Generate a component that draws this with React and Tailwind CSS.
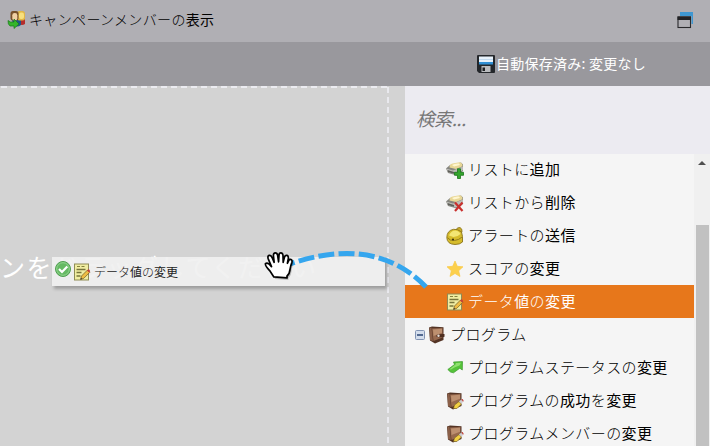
import React from "react";

const JP = "font-['Noto_Sans_CJK_JP',sans-serif]";

// Kana are set in a lighter weight than kanji.
function Jp({ children }) {
  const parts = children.match(/[\u3040-\u30ff]+|[^\u3040-\u30ff]+/g);
  return parts.map((p, i) => (
    <span key={i} className={/[\u3040-\u30ff]/.test(p) ? "font-light" : "font-normal"}>{p}</span>
  ));
}

function Members() {
  return (
    <svg width="19" height="19" viewBox="0 0 19 19" className="shrink-0">
      <path d="M12 9h6v5q-3 2-6 0z" fill="#b52d2c" />
      <path d="M5 9h9v6q-4 3-8 0z" fill="#1e5788" />
      <rect x="10" y="1" width="8" height="9.500" rx="2.500" fill="#e0b647" />
      <rect x="12" y="2.500" width="5" height="6.500" rx="2" fill="#f8e07d" />
      <rect x="3.500" y="1" width="8" height="9.500" rx="2.500" fill="#77502b" />
      <rect x="5.300" y="3" width="5" height="7.500" rx="2.300" fill="#f0d0a4" />
      <path d="M1 10.500l2.500 1.500H7V9l5 5-5 4.500V16H3Q.8 14.500 1 10.500z" fill="#35b52b" stroke="#18791a" strokeWidth=".7" />
    </svg>
  );
}

function Floppy() {
  return (
    <svg width="18" height="18" viewBox="0 0 18 18" className="shrink-0">
      <path d="M0 1q0-1 1-1h16q1 0 1 1v16q0 1-1 1H2l-2-2z" fill="#24272b" />
      <rect x="2" y="1.500" width="14" height="5.500" fill="#e8f2fb" />
      <rect x="2" y="4" width="14" height="1" fill="#c2daef" />
      <rect x="2" y="7" width="14" height="2.500" fill="#2f8fd4" />
      <rect x="4.500" y="11" width="9" height="6" fill="#b9bbbe" />
      <rect x="5.500" y="12.500" width="2.500" height="3.500" fill="#1d1f22" />
    </svg>
  );
}

function Windows() {
  return (
    <svg width="17" height="17" viewBox="0 0 17 17" className="shrink-0">
      <path d="M3 0h13v12h-1.500V4H3z" fill="#3f97d1" />
      <rect x="1" y="5" width="12.500" height="10.500" fill="#b0afb4" stroke="#29292c" strokeWidth="1.100" />
      <rect x=".5" y="4.500" width="13.500" height="3.500" fill="#222225" />
    </svg>
  );
}

function ListBase({ children }) {
  return (
    <svg width="18" height="18" viewBox="0 0 18 18" className="shrink-0">
      <path d="M0 7.500L4 4l11-2.500 2 2V10l-6 4.500L2 12z" fill="#85857f" />
      <path d="M0 7.500l7 2 10-4V9l-7 4.500L2 11z" fill="#bdbdb8" />
      <path d="M1.500 9l6.500 2v1.800L2 11z" fill="#5e5e59" />
      <path d="M3.500 6.500Q3.500 3 6.500 2.500l7-1.300q3 .3 3 4L10 8z" fill="#e8d796" />
      <path d="M6 4q3-2 7-1.500l1 1.500-6 1.500z" fill="#fff6cf" />
      {children}
    </svg>
  );
}

function ListAdd() {
  return (
    <ListBase>
      <path d="M11.500 7.800h3v3.500h3v3h-3v3.200h-3v-3.200h-3v-3h3z" fill="#34a52d" stroke="#177416" strokeWidth=".8" />
    </ListBase>
  );
}

function ListRemove() {
  return (
    <ListBase>
      <path d="M9 8.500l7.500 8.500M16.500 8.500L9 17" stroke="#c9302e" strokeWidth="2.200" />
    </ListBase>
  );
}

function Bell() {
  return (
    <svg width="18" height="18" viewBox="0 0 18 18" className="shrink-0">
      <path d="M10 3q1-3 4-2.500 2.500 1 2 4.500l-2 1z" fill="#c9ad2b" stroke="#8a741b" strokeWidth=".8" />
      <path d="M.8 10.500Q1 3.500 7.500 2.300q4-.6 8 2.700 1.500 4 1 10-2.500 2.500-7.500 2.500-8-.3-8.200-7z" fill="#d6bc2c" stroke="#8a741b" strokeWidth=".9" />
      <path d="M3 8.500q2-5 6.500-5 4 .5 5 3.500-3 3-7 3z" fill="#f3e674" />
      <path d="M1.500 10.500q2 3.500 7 3 4.500-.5 7.500-3.500" fill="none" stroke="#8b751d" strokeWidth=".9" />
      <circle cx="7" cy="12.500" r="1.100" fill="#433810" />
    </svg>
  );
}

function Star() {
  return (
    <svg width="18" height="18" viewBox="0 0 18 18" className="shrink-0">
      <path d="M9 1l2.300 5.300 5.700.5-4.300 3.900 1.300 5.800-5-3-5 3 1.300-5.800L1 6.800l5.700-.5z" fill="#fcd04c" stroke="#f9c846" strokeWidth=".7" strokeLinejoin="round" />
    </svg>
  );
}

function Note() {
  return (
    <svg width="18" height="18" viewBox="0 0 18 18" className="shrink-0">
      <rect x="1.500" y="1" width="14" height="16" fill="#f0eda2" stroke="#8f8b55" />
      <path d="M4 3.500h3m1.500 0h3" stroke="#85813d" />
      <path d="M3.500 6.500h9M3.500 9.500h5M3.500 13h4" stroke="#77753c" strokeWidth="1.400" />
      <path d="M7.500 16.500l1-3.500 6-6 2.300 2.300-6 6z" fill="#efbd43" stroke="#6e571e" strokeWidth=".7" />
      <path d="M14 7.500l1.200-1.200q1.500.2 2 2L16 9.500z" fill="#c5403a" />
      <path d="M7.500 16.500l.5-1.700 1.300 1.200z" fill="#333" />
    </svg>
  );
}

function Book({ edit }) {
  return (
    <svg width="18" height="18" viewBox="0 0 18 18" className="shrink-0">
      <path d="M1 1.500L4 .5l11.500.8V14l-8.500 3.500-5-3z" fill="#533324" />
      <path d="M1.500 2l2-.5 1.500 13.500-3-1z" fill="#8b6049" />
      <path d="M4 2.500l10.500-.5v9.500L5.500 15z" fill="#97694e" />
      <path d="M5 3.500l9-.7v4L5.500 10z" fill="#bd9070" />
      {!edit && <><path d="M8.500 9q4-1.500 8-1v2.700q-4 1-8 0z" fill="#4d2d20" /><circle cx="10.500" cy="9.800" r="1.200" fill="#e4ddd8" /></>}
      {edit && <><path d="M7.500 16.500l1-3.500 4.500-3.500 2.500 2.500-4.500 4.500z" fill="#f1cf42" stroke="#735d24" strokeWidth=".6" /><path d="M13 9.500l2-1.700 2 2-1.500 2.200z" fill="#cfcfd2" /><path d="M15.500 7.500l1.200-.5 1 2-.7.800z" fill="#bc302b" /></>}
    </svg>
  );
}

function ArrowUp() {
  return (
    <svg width="18" height="18" viewBox="0 0 18 18" className="shrink-0">
      <path d="M7.500 3l9-.4-.2 8.400-2.500-1.800-6.300 4.600q-3 .2-5.700-3.300L8.500 5.500z" fill="#55c33a" stroke="#3a9a2b" strokeWidth=".7" />
      <path d="M9.500 4l5.500-.2-1.500 2.700q-5 1.500-8.500 4l-1.500-.2L10 5z" fill="#8fe070" />
    </svg>
  );
}

function Check() {
  return (
    <svg width="18" height="18" viewBox="0 0 18 18" className="shrink-0">
      <circle cx="9" cy="9" r="7.500" fill="#65b963" stroke="#519e52" />
      <circle cx="9" cy="9" r="6.300" fill="none" stroke="#93d690" />
      <path d="M5 9l3 3 5.300-5.500" fill="none" stroke="#fff" strokeWidth="2.200" />
    </svg>
  );
}

const rows = [
  { icon: <ListAdd />, label: "リストに追加" },
  { icon: <ListRemove />, label: "リストから削除" },
  { icon: <Bell />, label: "アラートの送信" },
  { icon: <Star />, label: "スコアの変更" },
  { icon: <Note />, label: "データ値の変更", selected: true },
  { icon: <Book />, label: "プログラム", group: true },
  { icon: <ArrowUp />, label: "プログラムステータスの変更" },
  { icon: <Book edit />, label: "プログラムの成功を変更" },
  { icon: <Book edit />, label: "プログラムメンバーの変更" },
];

function Row({ icon, label, selected, group }) {
  return (
    <li className={`flex h-[33px] shrink-0 items-center text-[15px] tracking-[0.4px] ${group ? "pl-[10px]" : "pl-[41px]"} ${selected ? "bg-[#e7771b] text-white" : "text-black"}`}>
      {group && (
        <svg width="10" height="10" viewBox="0 0 10 10" className="mr-[3px] shrink-0">
          <rect x=".5" y=".5" width="9" height="9" rx="1" fill="#d4deed" stroke="#8294b4" />
          <path d="M2 5h6" stroke="#294372" strokeWidth="1.500" />
        </svg>
      )}
      {icon}
      <span className="ml-[4px]"><Jp>{label}</Jp></span>
    </li>
  );
}

export default function App() {
  return (
    <div className={`relative flex h-[446px] w-[710px] flex-col overflow-hidden whitespace-nowrap bg-[#d3d3d3] ${JP}`}>
      <header className="flex h-[42px] shrink-0 items-center justify-between bg-[#b0afb4] pr-4 pl-[7px]">
        <div className="flex items-center gap-[3px] pb-[3px] text-[14px] tracking-[0.35px] text-black">
          <Members />
          <span><Jp>キャンペーンメンバーの表示</Jp></span>
        </div>
        <div className="pb-[2px]"><Windows /></div>
      </header>
      <div className="flex h-[44px] shrink-0 items-center bg-[#99989d] pl-[477px] text-[14px] tracking-[0.25px] text-white">
        <Floppy />
        <span className="-mt-px ml-px">自動保存済み: 変更なし</span>
      </div>
      <main className="flex min-h-0 flex-1">
        <section className="relative mr-4 w-[389px] shrink-0 overflow-visible">
          <svg width="389" height="360" className="absolute inset-0">
            <path d="M0 1H388" stroke="#ececf1" strokeWidth="2" strokeDasharray="6 4" strokeDashoffset="-1" />
            <path d="M388 1V360" stroke="#e9e9ee" strokeWidth="2" strokeDasharray="6 4" />
          </svg>
          <p className="pt-[162px] text-[25px] leading-9 tracking-[1.6px] text-white">ンをドラッグしてください</p>
          <div className="absolute top-[171px] left-[52px] flex h-[29px] w-[333px] items-center bg-[#f0f0f0]/92 pl-[2px] text-[12px] text-[#222] shadow-[2px_3px_3px_rgba(0,0,0,0.25)]">
            <div className="mb-[5px]"><Check /></div>
            <div className="ml-px"><Note /></div>
            <span className="ml-[3px]"><Jp>データ値の変更</Jp></span>
          </div>
        </section>
        <aside className="flex min-w-0 flex-1 flex-col bg-[#f5f5f5]">
          <div className="flex h-[68px] shrink-0 items-center bg-[#ecebf1] pb-[3px] pl-[11px] text-[18.5px] font-normal tracking-[-0.6px] text-[#777] italic">検索...</div>
          <div className="flex min-h-0 flex-1 overflow-hidden">
            <ul className="-mt-px flex w-[289px] shrink-0 flex-col">
              {rows.map((r) => <Row key={r.label} {...r} />)}
            </ul>
            <div className="flex w-4 flex-col items-center bg-[#f0f0f0] pt-[7px]">
              <div className="h-0 w-0 border-x-[4px] border-b-[4px] border-x-transparent border-b-[#505050]" />
              <div className="mt-[60px] w-[13px] flex-1 bg-[#c1c1c1]" />
            </div>
          </div>
        </aside>
      </main>
      <svg width="710" height="446" viewBox="0 0 710 446" className="pointer-events-none absolute inset-0">
        <path d="M284 266Q374 233 426 287" fill="none" stroke="#35a6ee" strokeWidth="5" strokeDasharray="16 4.300" strokeDashoffset="5" />
        <g transform="translate(264 251) scale(.94 .98)">
          <path d="M10.500 26.500L6 20Q1 15 1.500 13q2.500-2 6.500 3L4.500 8q-1-3 1-3.500 2-.5 3.300 2.500l2 4.500-.8-7q0-2.500 2-2.500t2.500 2.500l1 6.500.5-7q.2-2 2-2t2.200 2.500l.2 7 1.500-5.500q.7-2 2.500-1.500t1.500 3l-1 5 1.500-3q1-1.500 2.500-.7 1.500.7.700 3-1.300 3-1.800 6.500-.5 5-3.300 7.200v2z" transform="translate(1.500 2)" fill="#000" opacity=".22" />
          <path d="M10.500 26.500L6 20Q1 15 1.500 13q2.500-2 6.500 3L4.500 8q-1-3 1-3.500 2-.5 3.300 2.500l2 4.500-.8-7q0-2.500 2-2.500t2.500 2.500l1 6.500.5-7q.2-2 2-2t2.200 2.500l.2 7 1.500-5.500q.7-2 2.500-1.500t1.500 3l-1 5 1.500-3q1-1.500 2.500-.7 1.500.7.700 3-1.300 3-1.800 6.500-.5 5-3.300 7.200v2z" fill="#fff" stroke="#000" strokeWidth="1.800" strokeLinejoin="round" />
        </g>
      </svg>
    </div>
  );
}
